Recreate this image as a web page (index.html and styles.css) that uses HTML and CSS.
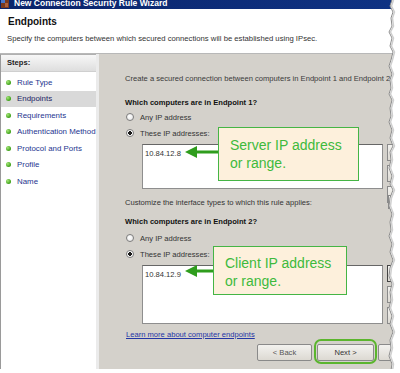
FILE: index.html
```html
<!DOCTYPE html>
<html lang="en">
<head>
    <meta charset="UTF-8">
    <meta name="viewport" content="width=device-width, initial-scale=1.0">
    <title>New Connection Security Rule Wizard</title>
    <link rel="stylesheet" href="styles.css">
</head>
<body>
    <div class="dialog">
        <div class="titlebar">
            <svg class="app-icon" width="10" height="9" viewBox="0 0 10 9">
                <rect x="1" y="0" width="8" height="8" fill="#7a3a1e"/>
                <rect x="1" y="0" width="4" height="3" fill="#4a78c8"/>
                <rect x="5" y="3" width="3" height="4" fill="#b0613a"/>
            </svg>
            <span class="title-text">New Connection Security Rule Wizard</span>
        </div>

        <div class="header">
            <div class="page-title">Endpoints</div>
            <div class="page-desc">Specify the computers between which secured connections will be established using IPsec.</div>
        </div>

        <div class="wizard-body">
            <div class="steps">
                <div class="steps-head">Steps:</div>
                <ul class="step-list">
                    <li class="step">Rule Type</li>
                    <li class="step current">Endpoints</li>
                    <li class="step">Requirements</li>
                    <li class="step">Authentication Method</li>
                    <li class="step">Protocol and Ports</li>
                    <li class="step">Profile</li>
                    <li class="step">Name</li>
                </ul>
            </div>

            <div class="content">
                <p class="intro">Create a secured connection between computers in Endpoint 1 and Endpoint 2.</p>

                <h2 class="group-title first">Which computers are in Endpoint 1?</h2>
                <div class="radio"><span class="radio-dot"></span>Any IP address</div>
                <div class="radio"><span class="radio-dot checked"></span>These IP addresses:</div>
                <div class="list-row short">
                    <div class="listbox">10.84.12.8</div>
                    <div class="side-buttons">
                        <div class="side-btn"></div>
                        <div class="side-btn"></div>
                        <div class="side-btn"></div>
                    </div>
                </div>

                <div class="customize-row">
                    <span>Customize the interface types to which this rule applies:</span>
                    <span class="side-btn"></span>
                </div>

                <h2 class="group-title">Which computers are in Endpoint 2?</h2>
                <div class="radio tight"><span class="radio-dot"></span>Any IP address</div>
                <div class="radio"><span class="radio-dot checked"></span>These IP addresses:</div>
                <div class="list-row tall">
                    <div class="listbox">10.84.12.9</div>
                    <div class="side-buttons">
                        <div class="side-btn focus"></div>
                        <div class="side-btn"></div>
                        <div class="side-btn"></div>
                    </div>
                </div>

                <a class="learn-link" href="#">Learn more about computer endpoints</a>

                <div class="button-row">
                    <div class="btn back">&lt; Back</div>
                    <div class="btn next">Next &gt;</div>
                    <div class="btn"></div>
                </div>
            </div>
        </div>

        <!-- annotations over the screenshot -->
        <svg class="arrow arrow-one" width="34" height="14" viewBox="0 0 34 14">
            <polygon points="0,7 12,1 12,13" fill="#2f9d1d"/>
            <rect x="10" y="5.5" width="24" height="3" fill="#2f9d1d"/>
        </svg>
        <div class="callout callout-one">Server IP address<br>or range.</div>

        <svg class="arrow arrow-two" width="29" height="14" viewBox="0 0 29 14">
            <polygon points="0,7 12,1 12,13" fill="#2f9d1d"/>
            <rect x="10" y="5.5" width="19" height="3" fill="#2f9d1d"/>
        </svg>
        <div class="callout callout-two">Client IP address<br>or range.</div>

        <!-- torn right edge of the screenshot -->
        <svg class="torn-edge" width="20" height="373" viewBox="0 0 20 373">
            <polygon fill="#fff" points="12,0 10,6 13,12 11,18 12,26 9,32 12,38 10,46 13,52 11,60 9,66 12,74 10,80 11,88 9,94 12,100 10,108 11,116 9,122 12,130 10,138 13,146 10,152 11,160 9,168 12,176 10,184 13,190 10,198 9,206 12,214 10,222 11,230 9,236 12,244 10,252 13,260 10,268 9,276 12,284 10,292 11,300 9,308 12,316 10,324 13,332 10,340 11,348 9,356 12,364 11,373 20,373 20,0"/>
            <polyline fill="none" stroke="#8c8c8c" stroke-width="1" points="12,0 10,6 13,12 11,18 12,26 9,32 12,38 10,46 13,52 11,60 9,66 12,74 10,80 11,88 9,94 12,100 10,108 11,116 9,122 12,130 10,138 13,146 10,152 11,160 9,168 12,176 10,184 13,190 10,198 9,206 12,214 10,222 11,230 9,236 12,244 10,252 13,260 10,268 9,276 12,284 10,292 11,300 9,308 12,316 10,324 13,332 10,340 11,348 9,356 12,364 11,370"/>
            <polyline fill="none" stroke="#cfcfcf" stroke-width="1.5" points="13.5,0 11.5,6 14.5,12 12.5,18 13.5,26 10.5,32 13.5,38 11.5,46 14.5,52 12.5,60 10.5,66 13.5,74 11.5,80 12.5,88 10.5,94 13.5,100 11.5,108 12.5,116 10.5,122 13.5,130 11.5,138 14.5,146 11.5,152 12.5,160 10.5,168 13.5,176 11.5,184 14.5,190 11.5,198 10.5,206 13.5,214 11.5,222 12.5,230 10.5,236 13.5,244 11.5,252 14.5,260 11.5,268 10.5,276 13.5,284 11.5,292 12.5,300 10.5,308 13.5,316 11.5,324 14.5,332 11.5,340 12.5,348 10.5,356 13.5,364 12.5,371"/>
        </svg>
    </div>
</body>
</html>
```

FILE: styles.css
```css
html, body {
    overflow: hidden;
}

body {
    margin: 0;
    background-color: #fff;
    font-family: 'Liberation Sans', Arial, sans-serif;
    font-size: 7.6px;
    color: #333;
}

.dialog {
    position: relative;
    width: 400px;
    height: 369px;
    overflow: hidden;
    background-color: #d4d1cb;
    box-shadow: 0 1px 2px rgba(0, 0, 0, 0.5);
}

/* title bar (top of it is cropped away) */
.titlebar {
    height: 9px;
    display: flex;
    align-items: flex-end;
    gap: 4px;
    overflow: hidden;
    background: linear-gradient(to right, #0a246a, #0f3384);
}

.app-icon {
    flex-shrink: 0;
}

.title-text {
    color: #fff;
    font-weight: bold;
    font-size: 8.5px;
    line-height: 9px;
    margin-bottom: 1px;
    white-space: nowrap;
}

.header {
    box-sizing: border-box;
    height: 45px;
    background-color: #fff;
    border-bottom: 1px solid #b8b8b8;
    padding: 7px 0 0 8px;
}

.page-title {
    font-size: 10px;
    font-weight: bold;
    color: #111;
    line-height: 12px;
}

.page-desc {
    margin-top: 6px;
    margin-left: -1px;
    line-height: 10px;
    font-size: 7.7px;
    color: #333;
    white-space: nowrap;
}

.wizard-body {
    display: flex;
    height: 315px;
}

/* left steps pane */
.steps {
    width: 96px;
    flex-shrink: 0;
    box-sizing: border-box;
    background-color: #fff;
    border-left: 1px solid #9a9a9a;
    border-top: 1px solid #b0b0b0;
}

.steps-head {
    box-sizing: border-box;
    height: 17px;
    line-height: 16px;
    padding-left: 6px;
    font-weight: bold;
    color: #222;
    background: linear-gradient(#f7f7f7, #dedede);
    border-bottom: 1px solid #cfcfcf;
}

.step-list {
    list-style: none;
    margin: 0;
    padding: 2px 0 0;
}

.step {
    display: flex;
    align-items: center;
    gap: 6px;
    height: 16.5px;
    padding-left: 5px;
    font-size: 7.9px;
    color: #25358f;
    white-space: nowrap;
}

.step::before {
    content: '';
    width: 5px;
    height: 5px;
    border-radius: 50%;
    flex-shrink: 0;
    background: radial-gradient(circle at 35% 35%, #a6e878, #3c9f17 70%);
}

.step.current {
    background-color: #d9d9d9;
    color: #1c2465;
}

/* right content pane */
.content {
    flex: 1;
    overflow: hidden;
    border-left: 3px solid #ebebeb;
    padding-left: 26px;
    white-space: nowrap;
}

.intro {
    margin: 20px 0 0;
    line-height: 10px;
    color: #3a3a3a;
}

.group-title {
    margin: 8px 0 0;
    font-size: 7.6px;
    font-weight: bold;
    line-height: 10px;
    color: #111;
}

.group-title.first {
    margin-top: 14px;
}

.radio {
    display: flex;
    align-items: center;
    gap: 6px;
    height: 12px;
    margin-top: 3px;
    margin-left: 1px;
    color: #333;
}

.radio.tight {
    margin-top: 5px;
}

.radio + .radio {
    margin-top: 4px;
}

.radio-dot {
    width: 8px;
    height: 8px;
    box-sizing: border-box;
    border-radius: 50%;
    border: 1px solid #7d7d7d;
    background: radial-gradient(circle at 40% 40%, #fff, #e2e2e2);
}

.radio-dot.checked {
    background: radial-gradient(circle, #1a1a1a 0 1.6px, #fff 2.1px);
}

.list-row {
    display: flex;
    gap: 4px;
    margin: 5px 0 0 17px;
}

.list-row.short {
    height: 45px;
}

.list-row.tall {
    height: 59px;
}

.listbox {
    box-sizing: border-box;
    width: 241px;
    flex-shrink: 0;
    background-color: #fff;
    border: 1px solid #8e8e8e;
    border-top-color: #666;
    padding: 4px 2px;
    line-height: 10px;
    color: #333;
}

.side-buttons {
    display: flex;
    flex-direction: column;
    gap: 4px;
}

.side-btn {
    box-sizing: border-box;
    display: inline-block;
    flex-shrink: 0;
    width: 30px;
    height: 17px;
    background: linear-gradient(#f3f2ef, #dddad3);
    border: 1px solid #8a8a8a;
}

.side-btn.focus {
    border-color: #444;
}

.customize-row {
    display: flex;
    justify-content: space-between;
    align-items: center;
    height: 14px;
    margin-top: 6px;
}

.customize-row .side-btn {
    height: 14px;
    margin-right: -18px;
}

.learn-link {
    display: block;
    margin-top: 6px;
    margin-left: 1px;
    line-height: 10px;
    color: #2436a6;
    text-decoration: underline;
}

.button-row {
    display: flex;
    gap: 5px;
    margin: 4px 0 0 132px;
}

.btn {
    position: relative;
    box-sizing: border-box;
    flex-shrink: 0;
    width: 55px;
    height: 17px;
    line-height: 15px;
    text-align: center;
    background: linear-gradient(#f3f2ef, #dcd9d2);
    border: 1px solid #8a8a8a;
    border-radius: 2px;
    color: #333;
}

.btn.back {
    color: #555;
}

.btn.next {
    width: 57px;
    margin-right: -1px;
}

.btn.next::after {
    content: '';
    position: absolute;
    left: -4px;
    right: -4px;
    top: -6px;
    bottom: -4px;
    border: 2px solid #5bb52e;
    border-radius: 7px;
}

/* callouts */
.callout {
    position: absolute;
    box-sizing: border-box;
    background-color: #fdf0dc;
    border: 1px solid #45b545;
    color: #3dba3d;
    font-size: 14px;
    line-height: 18px;
    padding: 8px 0 0 11px;
    white-space: nowrap;
}

.callout-one {
    left: 218px;
    top: 127px;
    width: 141px;
    height: 54px;
}

.callout-two {
    left: 213px;
    top: 246px;
    width: 134px;
    height: 49px;
    padding-top: 7px;
}

.arrow {
    position: absolute;
}

.arrow-one {
    left: 185px;
    top: 145px;
}

.arrow-two {
    left: 185px;
    top: 264px;
}

.torn-edge {
    position: absolute;
    top: 0;
    left: 380px;
}
```
